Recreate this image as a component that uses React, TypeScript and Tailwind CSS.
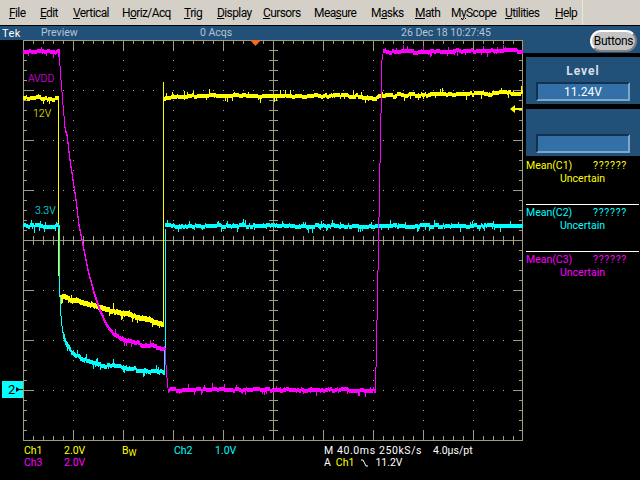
const ui = "font-['Roboto','Liberation_Sans',sans-serif]";

const menu = [
  { pre: "", u: "F", post: "ile", w: "w-[15px]" },
  { pre: "", u: "E", post: "dit", w: "w-[17px]" },
  { pre: "", u: "V", post: "ertical", w: "w-[33px]" },
  { pre: "H", u: "o", post: "riz/Acq", w: "w-[46px]" },
  { pre: "", u: "T", post: "rig", w: "w-[17px]" },
  { pre: "", u: "D", post: "isplay", w: "w-[30px]" },
  { pre: "", u: "C", post: "ursors", w: "w-[35px]" },
  { pre: "Mea", u: "s", post: "ure", w: "w-[41px]" },
  { pre: "M", u: "a", post: "sks", w: "w-[28px]" },
  { pre: "", u: "M", post: "ath", w: "w-[20px]" },
  { pre: "M", u: "y", post: "Scope", w: "w-[38px]" },
  { pre: "", u: "U", post: "tilities", w: "w-[34px]" },
  { pre: "", u: "H", post: "elp", w: "w-[20px]" },
];

// small seeded generator so the noise is the same on every load
function rng(seed: number) {
  let s = seed;
  return () => {
    s = (s * 1664525 + 1013904223) % 4294967296;
    return s / 4294967296;
  };
}

type Pt = [number, number];

function at(points: Pt[], x: number) {
  for (let i = 1; i < points.length; i++) {
    const [x0, y0] = points[i - 1];
    const [x1, y1] = points[i];
    if (x <= x1) return y0 + ((y1 - y0) * (x - x0)) / (x1 - x0 || 1);
  }
  return points[points.length - 1][1];
}

// one vertical run per pixel column, that is how the scope paints a noisy trace
function band(seed: number, points: Pt[], thick: number, noise: number) {
  const r = rng(seed);
  let d = "";
  let off = 0;
  const last = points[points.length - 1][0];
  for (let x = points[0][0]; x <= last; x++) {
    if (r() < 0.4) off = Math.round((r() - 0.5) * 2 * noise);
    const spike = noise > 0 && r() < 0.16 ? Math.round((r() - 0.5) * 9) : 0;
    const y = Math.round(at(points, x)) + off;
    const next = Math.round(at(points, Math.min(x + 1, last))) + off;
    const top = Math.min(y, next) - Math.floor(thick / 2) + Math.min(spike, 0);
    const bottom = Math.max(y, next) + Math.ceil(thick / 2) + Math.max(spike, 0);
    d += `M${x + 0.5} ${top}V${bottom}`;
  }
  return d;
}

const yellowPath =
  band(3, [[23, 98], [58, 99]], 4, 1) +
  "M58.5 99V276" +
  band(7, [[60, 296], [163, 324]], 5, 1) +
  "M163.5 324V82" +
  band(11, [[164, 99], [167, 98], [190, 96], [360, 96], [375, 99], [380, 97], [400, 95], [523, 93]], 4, 1);

const cyanPath =
  band(13, [[23, 226], [59, 226]], 4, 1) +
  "M59.5 226V297M60.5 297V316M61.5 316V326M62.5 326V333" +
  band(17, [[63, 333], [66, 343], [70, 350], [75, 354], [85, 360], [100, 365], [120, 367], [140, 370], [164, 372]], 4, 1) +
  "M164.5 372V348M165.5 348V229" +
  band(19, [[165, 226], [523, 226]], 4, 1);

const magentaPath =
  band(23, [[23, 52], [59, 52]], 4, 1) +
  "M59.5 52V66M60.5 66V80M61.5 80V92M62.5 92V105M63.5 105V116M64.5 116V128" +
  band(29, [[65, 128], [67, 135], [70, 160], [73, 180], [76, 200], [79, 225], [82, 240], [85, 255], [88, 270], [92, 285]], 2, 0) +
  band(31, [[92, 285], [96, 298], [100, 310], [107, 325], [115, 335]], 3, 0) +
  band(37, [[115, 335], [127, 340], [143, 345], [164, 348]], 4, 1) +
  "M165.5 348V365M166.5 365V378M167.5 378V388" +
  band(41, [[168, 390], [375, 390]], 4, 1) +
  "M375.5 390V367M376.5 367V320M377.5 320V270M378.5 270V217M379.5 217V163M380.5 163V113M381.5 113V60M382.5 60V54" +
  band(43, [[383, 52], [523, 51]], 4, 1);

const tens = Array.from({ length: 49 }, (_, i) => 33 + i * 10);
const rows = Array.from({ length: 39 }, (_, i) => 50 + i * 10);
const columns = [73, 123, 173, 223, 323, 373, 423, 473];
const lines = [90, 140, 190, 290, 340, 390];

function buildGraticule() {
  let ticks = "";
  let dots = "";
  for (const x of tens) {
    const big = (x - 23) % 50 === 0;
    const len = big ? 10 : 4;
    ticks += `M${x + 0.5} 40V${40 + len}M${x + 0.5} 440V${440 - len}`;
    ticks += `M${x + 0.5} 236V245`;
  }
  for (const y of rows) {
    const big = (y - 40) % 50 === 0;
    const len = big ? 10 : 4;
    ticks += `M23 ${y + 0.5}H${23 + len}M523 ${y + 0.5}H${523 - len}`;
    ticks += `M269 ${y + 0.5}H278`;
  }
  for (const x of columns) {
    for (const y of rows) dots += `M${x} ${y}h1v1h-1z`;
  }
  for (const y of lines) {
    for (const x of tens) dots += `M${x} ${y}h1v1h-1z`;
  }
  return { ticks, dots };
}

const { ticks, dots } = buildGraticule();

function Scope() {
  return (
    <svg width="523" height="402" viewBox="0 40 523 402" className="block" shapeRendering="crispEdges">
      <path d={dots} fill="#a8a48c" />
      <path d={ticks} stroke="#a09c80" fill="none" />
      <path d="M23.5 40V440.5M23 40.5H523M23 440.5H523M522.5 40V440.5M23 240.5H523M273.5 40V440" stroke="#a09c80" fill="none" />
      <path d={yellowPath} stroke="#ffff00" fill="none" />
      <path d={cyanPath} stroke="#00ffff" fill="none" />
      <path d={magentaPath} stroke="#ff00ff" fill="none" />
      <path d="M250 40h11l-5.500 6z" fill="#f26b21" shapeRendering="auto" />
      <path d="M510 109l5 -4v3h7v2h-7v3z" fill="#ffff00" shapeRendering="auto" />
      <rect x="2" y="381" width="21" height="17" fill="#00ffff" />
      <path d="M16 387l4 2.500l-4 2.500zM17 389h6v1h-6z" fill="#000000" shapeRendering="auto" />
      <g fontFamily="Roboto, 'Liberation Sans', sans-serif" fontSize="10.5" fontWeight="300" shapeRendering="auto">
        <text x="28" y="82" fill="#ff00ff">AVDD</text>
        <text x="33" y="117" fill="#ffff00">12V</text>
        <text x="35" y="214" fill="#00ffff">3.3V</text>
        <text x="8" y="394" fill="#000000" fontSize="13" fontWeight="400">2</text>
      </g>
    </svg>
  );
}

function Readout({ value }: { value?: string }) {
  return (
    <div className="mx-[10px] flex h-[19px] items-center justify-center border-2 border-t-[#13304d] border-l-[#13304d] border-r-[#7fa6c9] border-b-[#7fa6c9] bg-[#3370a8] text-[12px] text-white">
      {value}
    </div>
  );
}

function Measurement({ name, color, line }: { name: string; color: string; line: boolean }) {
  return (
    <div className={`mr-px flex h-[47px] flex-col pt-[1px] text-[10.5px] leading-[13px] ${color} ${line ? "border-b border-white" : ""}`}>
      <div className="flex justify-between pr-[12px]">
        <span>{name}</span>
        <span className="tracking-[0.7px]">??????</span>
      </div>
      <div className="pl-[34px]">Uncertain</div>
    </div>
  );
}

export default function App() {
  return (
    <div className={`flex h-[480px] w-[640px] flex-col overflow-hidden bg-black ${ui}`}>
      <div className="h-[25px] bg-[#d4d0c8]">
        <div className="flex h-[25px] w-[583px] items-center gap-4 border-r border-[#e8e6e0] pl-[9px] text-[12px] tracking-[-0.6px] text-black">
          {menu.map((m) => (
            <span key={m.pre + m.u + m.post} className={`${m.w} whitespace-nowrap`}>
              {m.pre}
              <span className="underline">{m.u}</span>
              {m.post}
            </span>
          ))}
        </div>
      </div>
      <div className="mt-px flex flex-1">
        <div className="flex w-[523px] flex-col">
          <div className="flex h-[14px] items-center bg-[#215078] text-[10.5px] leading-none text-[#b5c5d5]">
            <span className="w-[41px] pl-[2px] text-[11px] tracking-[0.4px] text-white">Tek</span>
            <span className="w-[159px]">Preview</span>
            <span className="w-[201px]">0 Acqs</span>
            <span>26 Dec 18 10:27:45</span>
          </div>
          <Scope />
          <div className="grid grid-cols-[40px_58px_52px_41px_109px_109px_1fr] pl-[24px] pt-[3px] text-[10.5px] leading-[12px] text-white">
            <span className="text-[#ffff00]">Ch1</span>
            <span className="text-[#ffff00]">2.0V</span>
            <span className="text-[#ffff00]">
              B<sub className="text-[9px]">W</sub>
            </span>
            <span className="text-[#00ffff]">Ch2</span>
            <span className="text-[#00ffff]">1.0V</span>
            <span className="whitespace-nowrap tracking-[0.6px]">M 40.0ms 250kS/s</span>
            <span className="whitespace-nowrap">4.0µs/pt</span>
            <span className="text-[#ff00ff]">Ch3</span>
            <span className="text-[#ff00ff]">2.0V</span>
            <span className="col-span-3" />
            <span className="col-span-2 flex items-center whitespace-nowrap">
              A <span className="ml-[5px] text-[#ffff00]">Ch1</span>
              <svg width="7" height="8" viewBox="0 0 7 8" className="mx-[7px]">
                <path d="M0 1h2l3 6h2" stroke="#ffffff" fill="none" />
              </svg>
              11.2V
            </span>
          </div>
        </div>
        <div className="flex w-[117px] flex-col">
          <div className="flex h-[27px] justify-end bg-[#215078] pr-[3px] pt-[4px]">
            <div className="flex h-[22px] w-[47px] items-center justify-center rounded-full border-2 border-t-white border-l-white border-r-[#808080] border-b-[#808080] bg-[#c4c4c4] text-[12px] tracking-[-0.3px] text-black">
              Buttons
            </div>
          </div>
          <div className="ml-[3px] mt-[4px] h-[47px] bg-[#215078] pt-[7px]">
            <div className="mb-[4px] text-center text-[12px] leading-[14px] font-bold tracking-[1px] text-[#d8dfe6]">Level</div>
            <Readout value="11.24V" />
          </div>
          <div className="ml-[3px] mt-[5px] flex h-[47px] flex-col justify-end bg-[#215078] pb-[3px]">
            <Readout />
          </div>
          <div className="ml-[3px] mt-[2px]">
            <Measurement name="Mean(C1)" color="text-[#ffff00]" line />
            <Measurement name="Mean(C2)" color="text-[#00ffff]" line />
            <Measurement name="Mean(C3)" color="text-[#ff00ff]" line={false} />
          </div>
        </div>
      </div>
    </div>
  );
}
